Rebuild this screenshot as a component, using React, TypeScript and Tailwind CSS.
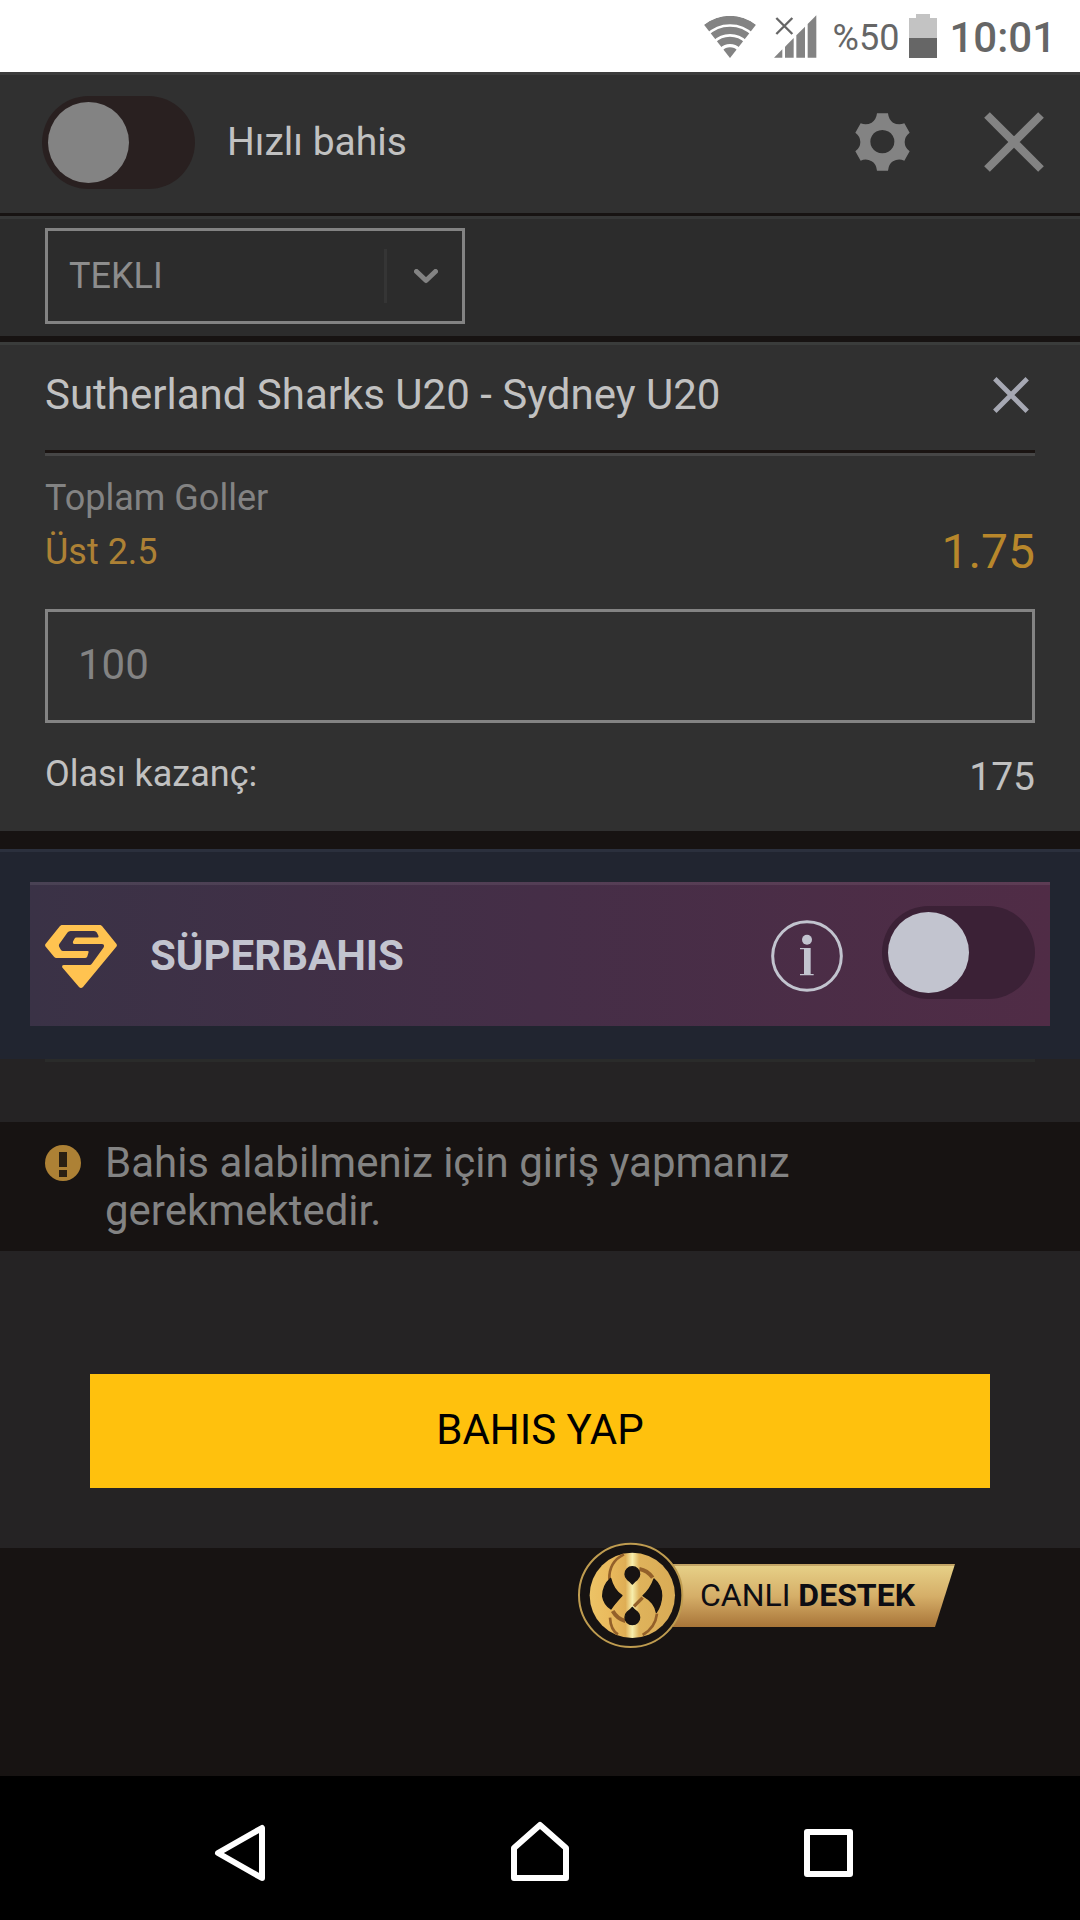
import React from "react";

function WifiIcon() {
  return (
    <svg className="h-[43px] w-[52px]" viewBox="0 0 156 129" aria-hidden="true">
      <defs>
        <clipPath id="wifi-fan">
          <path d="M78 129 L0 29 Q36 2 78 2 Q120 2 156 29 Z" />
        </clipPath>
      </defs>
      <g clipPath="url(#wifi-fan)" fill="none" stroke="#838383">
        <circle cx="78" cy="129" r="114" strokeWidth="25" />
        <circle cx="78" cy="129" r="83" strokeWidth="22" />
        <circle cx="78" cy="129" r="53" strokeWidth="22" />
        <circle cx="78" cy="129" r="16" strokeWidth="32" />
      </g>
    </svg>
  );
}

function SignalIcon() {
  return (
    <svg className="h-[43px] w-[43px]" viewBox="0 0 129 129" aria-hidden="true">
      <g fill="#838383">
        <path d="M0 128 L25 103 V128 Z" />
        <path d="M33 95 L59 69 V128 H33 Z" />
        <path d="M67 61 L93 35 V128 H67 Z" />
        <path d="M101 27 L127 1 V128 H101 Z" />
      </g>
      <path d="M7 9 L55 57 M55 9 L7 57" stroke="#666" strokeWidth="7" />
    </svg>
  );
}

function BatteryIcon() {
  return (
    <svg className="h-[44px] w-7" viewBox="0 0 28 44" aria-hidden="true">
      <path d="M7 0 H21 V4 H28 V24 H0 V4 H7 Z" fill="#c3c3c3" />
      <path d="M0 24 H28 V44 H0 Z" fill="#666" />
    </svg>
  );
}

function StatusBar() {
  return (
    <div className="flex h-[72px] items-center justify-end bg-white pr-6 text-[#666]">
      <WifiIcon />
      <div className="ml-[18px]">
        <SignalIcon />
      </div>
      <span className="ml-4 pt-[3px] text-[36px] leading-[48px]">%50</span>
      <div className="ml-2.5">
        <BatteryIcon />
      </div>
      <span className="ml-3 pt-[3px] text-[42px] leading-[48px] font-medium">10:01</span>
    </div>
  );
}

function GearIcon() {
  return (
    <svg className="h-[58px] w-[55px]" viewBox="0 0 165 174" aria-hidden="true">
      <path
        fill="#838383"
        fillRule="evenodd"
        d="M66 1 H99 Q101 20 114 29 Q130 38 148 31 L164 59 Q149 70 149 87 Q149 104 164 115 L148 143 Q130 135 114 145 Q101 153 99 173 H66 Q64 153 50 145 Q34 135 17 143 L1 115 Q16 104 16 87 Q16 70 1 59 L17 31 Q34 38 50 29 Q64 20 66 1 Z M82 51 a36 35 0 1 0 0.1 0 Z"
      />
    </svg>
  );
}

function SuperLogo() {
  return (
    <svg className="h-[63px] w-[72px]" viewBox="0 0 72 63" aria-hidden="true">
      <path
        fill="#ffc350"
        d="M16.500 0 H55.500 L57 1 L71.500 19 Q72.300 20.300 71.500 21.600 L38 62 Q36 64 34 62 L17.300 42.500 Q16.500 40 19 40 H44.500 Q46 40 47 38.500 L58.600 22.500 Q60 19 57 19 H29 Q27.500 19 28 16.500 L29.500 13.800 Q30 12.500 31.500 12.500 H52.500 Q54 12.500 53.300 10.500 L51.800 7.500 Q51 6 49 6 H25.500 Q23.500 6 22.500 7.500 L14.300 19 Q13.500 20.500 14.300 22 L16 25 Q16.800 26 18 26 H42.500 Q44 26 43.500 27.500 L42.300 31.500 Q41.500 33 40 33 H11.500 Q10 33 9 31.800 L0.500 21.500 Q-0.300 20.200 0.500 19 L15 1 Z"
      />
    </svg>
  );
}

function InfoIcon() {
  return (
    <svg className="size-[72px]" viewBox="0 0 216 216" aria-hidden="true">
      <circle cx="108" cy="108" r="103" fill="none" stroke="#c2c4cf" strokeWidth="9" />
      <circle cx="108" cy="59" r="15" fill="#c2c4cf" />
      <path d="M87 84 H119 V162 H128 V166 H87 V162 H99 V88 H87 Z" fill="#c2c4cf" />
    </svg>
  );
}

function AlertIcon() {
  return (
    <svg className="size-9 shrink-0" viewBox="0 0 36 36" aria-hidden="true">
      <circle cx="18" cy="18" r="18" fill="#ad8135" />
      <path d="M14 7 H22 V22 H14 Z M14 25 H22 V32 H14 Z" fill="#2a2013" />
    </svg>
  );
}

function Emblem() {
  return (
    <svg className="relative z-10 h-[107px] w-[107px]" viewBox="54 69 321 321" aria-hidden="true">
      <defs>
        <linearGradient id="disc" x1="0" x2="1" y1="0" y2="0">
          <stop offset="0" stopColor="#ecc366" />
          <stop offset="0.22" stopColor="#eabb5e" />
          <stop offset="0.42" stopColor="#dfae55" />
          <stop offset="0.5" stopColor="#f7eeac" />
          <stop offset="0.58" stopColor="#dfb35b" />
          <stop offset="1" stopColor="#d9ab55" />
        </linearGradient>
      </defs>
      <circle cx="212" cy="229" r="155" fill="#171312" stroke="#bf9c50" strokeWidth="6" />
      <circle cx="217" cy="229" r="128" fill="url(#disc)" />
      <g fill="none" stroke="#93602a" strokeWidth="8">
        <path d="M192 106 Q146 128 148 182" />
        <path d="M150 296 Q152 334 174 346" />
        <path d="M238 150 Q262 154 278 176" strokeWidth="12" />
        <path d="M158 276 Q172 300 196 306" strokeWidth="12" />
        <path d="M291 284 Q286 326 248 348" />
        <path d="M222 262 L248 236" strokeWidth="10" />
      </g>
      <g fill="#171312" stroke="#171312" strokeWidth="4" strokeLinejoin="round">
        <path d="M152 178 Q128 200 128 232 Q132 256 153 270 Q162 256 186 230 Q160 212 152 178 Z" />
        <path d="M282 180 Q305 200 305 230 Q304 258 289 280 Q284 250 249 230 Q272 210 282 180 Z" />
        <path d="M217 195 Q212 188 202 181 A22 22 0 1 1 232 181 Q222 188 217 195 Z" />
        <path d="M217 265 Q222 272 232 279 A22 22 0 1 1 202 279 Q212 272 217 265 Z" />
      </g>
    </svg>
  );
}

function CloseMark({ className, color, width }: { className: string; color: string; width: number }) {
  return (
    <svg className={className} viewBox="0 0 60 60" aria-hidden="true">
      <path d="M3 3 L57 57 M57 3 L3 57" stroke={color} strokeWidth={width} />
    </svg>
  );
}

export default function App() {
  return (
    <div className="flex min-h-screen flex-col bg-[#171312] font-['Roboto',sans-serif]">
      <StatusBar />

      <header className="flex h-[141px] items-center bg-[#303030] pr-9 pb-px pl-[42px] shadow-[inset_0_3px_0_#3c3c3c]">
        <input
          id="quick-bet"
          type="checkbox"
          role="switch"
          className="h-[93px] w-[153px] appearance-none rounded-full bg-[#292020] p-1.5 before:block before:size-[81px] before:rounded-full before:bg-[#838383] before:content-[''] checked:before:translate-x-[60px]"
        />
        <label htmlFor="quick-bet" className="ml-8 text-[39px] leading-[48px] text-[#c1c1c1]">
          Hızlı bahis
        </label>
        <button type="button" aria-label="Ayarlar" className="ml-auto">
          <GearIcon />
        </button>
        <button type="button" aria-label="Kapat" className="ml-[74px]">
          <CloseMark className="size-[60px]" color="#838383" width={8} />
        </button>
      </header>

      <div className="mt-[3px] bg-[#2c2c2c] px-[45px] py-3 shadow-[inset_0_3px_0_#363737]">
        <div className="relative w-[420px]">
          <select
            aria-label="Kupon türü"
            className="block h-24 w-full appearance-none rounded-none border-3 border-[#838383] bg-transparent px-[21px] text-[36px] leading-[48px] text-[#8d8d8d]"
          >
            <option>TEKLI</option>
          </select>
          <div className="pointer-events-none absolute inset-y-0 right-0 flex items-center pr-[27px]">
            <span className="mr-[27px] h-[54px] w-[3px] bg-[#353535]" />
            <svg className="h-[15px] w-6" viewBox="0 0 24 15" aria-hidden="true">
              <path d="M2.500 2.500 L12 11.500 L21.500 2.500" fill="none" stroke="#838383" strokeWidth="5" strokeLinecap="round" strokeLinejoin="round" />
            </svg>
          </div>
        </div>
      </div>

      <main className="flex flex-1 flex-col">
        <section className="mt-1.5 bg-[#303030] px-[45px] pb-6 shadow-[inset_0_3px_0_#3a3c3b]">
          <div className="flex items-center justify-between pt-[26px] pr-1.5 pb-7">
            <h2 className="text-[42px] leading-[54px] text-[#c1c1c1]">Sutherland Sharks U20 - Sydney U20</h2>
            <button type="button" aria-label="Bahsi kaldır">
              <CloseMark className="size-9" color="#a6a8b3" width={8} />
            </button>
          </div>
          <div className="h-1.5 border-t-3 border-[#1a1412] bg-[#464646]" />
          <p className="mt-[15px] text-[36px] leading-[54px] text-[#838383]">Toplam Goller</p>
          <div className="flex justify-between leading-[54px]">
            <span className="text-[36px] text-[#ad8135]">Üst 2.5</span>
            <span className="text-[48px] text-[#b8872b]">1.75</span>
          </div>
          <input
            type="text"
            inputMode="numeric"
            aria-label="Bahis miktarı"
            defaultValue="100"
            className="mt-[30px] block h-[114px] w-full border-3 border-[#838383] bg-transparent px-[30px] pb-1 text-[42px] leading-[54px] text-[#838383]"
          />
          <div className="mt-6 flex items-start justify-between text-[#c1c1c1]">
            <span className="text-[36px] leading-[54px]">Olası kazanç:</span>
            <span className="text-[39px] leading-[60px]">175</span>
          </div>
        </section>

        <section className="mt-[18px] bg-[#212530] px-[30px] py-[33px] shadow-[inset_0_3px_0_#2b303d]">
          <div className="flex h-36 items-center bg-linear-to-r from-[#3a3246] via-[#452e47] to-[#502c46] px-[15px] pb-[3px] shadow-[inset_0_3px_0_rgba(255,255,255,0.08)]">
            <div className="flex flex-1 items-center pt-[7px]">
              <SuperLogo />
              <label htmlFor="super-bet" className="ml-[33px] text-[42px] leading-[54px] font-bold text-[#c2c4cf]">
                SÜPERBAHIS
              </label>
              <button type="button" aria-label="Bilgi" className="ml-auto">
                <InfoIcon />
              </button>
            </div>
            <input
              id="super-bet"
              type="checkbox"
              role="switch"
              className="ml-[39px] h-[93px] w-[153px] appearance-none rounded-full bg-[#3b2136] p-1.5 before:block before:size-[81px] before:rounded-full before:bg-[#c2c4cf] before:content-[''] checked:before:translate-x-[60px]"
            />
          </div>
        </section>

        <div className="h-[63px] bg-[#252324] px-[45px]">
          <div className="h-[3px] bg-[#2a2b2a]" />
        </div>

        <div role="alert" className="flex gap-6 px-[45px] pt-[17px] pb-4">
          <div className="flex h-12 items-center">
            <AlertIcon />
          </div>
          <p className="text-[42px] leading-[48px] text-[#838383]">Bahis alabilmeniz için giriş yapmanız gerekmektedir.</p>
        </div>

        <div className="bg-[#252324] px-[90px] pt-[123px] pb-[60px]">
          <button type="button" className="block h-[114px] w-full bg-[#ffc10d] pb-0.5 text-[42px] leading-[54px] text-black">
            BAHIS YAP
          </button>
        </div>

        <div className="relative flex-1">
          <a href="#destek" className="absolute -top-[6px] right-[125px] flex items-center">
            <Emblem />
            <span className="-ml-3 block h-[63px] border-t-2 border-[#c3a566] bg-linear-to-b from-[#e6d087] via-[#d5ae68] to-[#a87538] pr-10 pl-[27px] text-[32px] leading-[58px] whitespace-nowrap text-[#0d0d14] [clip-path:polygon(0_0,100%_0,calc(100%-20px)_100%,0_100%)]">
              CANLI <b>DESTEK</b>
            </span>
          </a>
        </div>
      </main>

      <nav className="grid h-36 grid-cols-3 items-center justify-items-center bg-black px-[108px]">
        <button type="button" aria-label="Geri">
          <svg className="h-[72px] w-24" viewBox="0 0 96 72" fill="none" stroke="#fff" strokeWidth="6" strokeLinejoin="round" aria-hidden="true">
            <path d="M14 41 L58 16 V66 Z" />
          </svg>
        </button>
        <button type="button" aria-label="Ana ekran">
          <svg className="h-[72px] w-24" viewBox="0 0 96 72" fill="none" stroke="#fff" strokeWidth="6" strokeLinejoin="round" aria-hidden="true">
            <path d="M22 66 V36 L48 13 L74 36 V66 Z" />
          </svg>
        </button>
        <button type="button" aria-label="Son uygulamalar">
          <svg className="h-[72px] w-24" viewBox="0 0 96 72" fill="none" stroke="#fff" strokeWidth="6" strokeLinejoin="round" aria-hidden="true">
            <path d="M27 20 H70 V62 H27 Z" />
          </svg>
        </button>
      </nav>
    </div>
  );
}
